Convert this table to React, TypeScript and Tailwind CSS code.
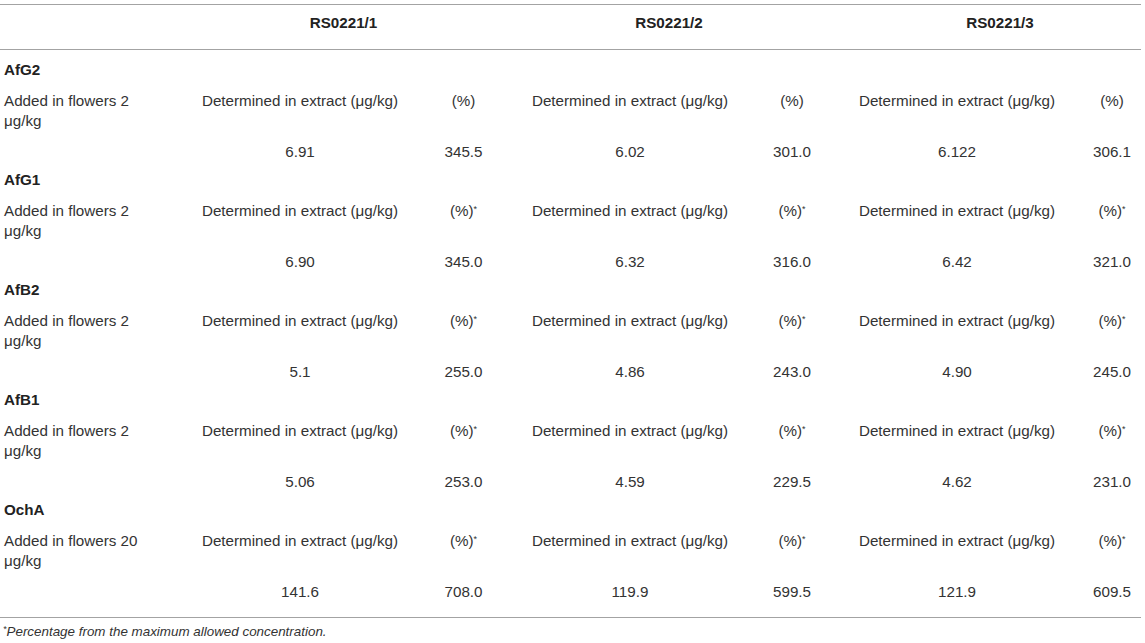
import React from 'react';

/**
 * RecoveryTable
 * Spiked flower samples: determined amount in extract and % of the maximum allowed concentration.
 */

interface Group {
    name: string;
    amount: string;
    starred: boolean;
    values: [string, string][];
}

const groups: Group[] = [
    { name: 'AfG2', amount: '2', starred: false, values: [['6.91', '345.5'], ['6.02', '301.0'], ['6.122', '306.1']] },
    { name: 'AfG1', amount: '2', starred: true, values: [['6.90', '345.0'], ['6.32', '316.0'], ['6.42', '321.0']] },
    { name: 'AfB2', amount: '2', starred: true, values: [['5.1', '255.0'], ['4.86', '243.0'], ['4.90', '245.0']] },
    { name: 'AfB1', amount: '2', starred: true, values: [['5.06', '253.0'], ['4.59', '229.5'], ['4.62', '231.0']] },
    { name: 'OchA', amount: '20', starred: true, values: [['141.6', '708.0'], ['119.9', '599.5'], ['121.9', '609.5']] },
];

const samples = ['RS0221/1', 'RS0221/2', 'RS0221/3'];

export default function App() {
    return (
        <div className="bg-white w-[1145px] h-[643px] pt-1 text-[15.2px] leading-5 text-[#333]" style={{ fontFamily: '"Liberation Sans", Arial, sans-serif' }}>
            <table className="w-[1141px] table-fixed border-collapse">
                <colgroup>
                    <col className="w-[180px]" />
                    <col className="w-[240px]" />
                    <col className="w-[87px]" />
                    <col className="w-[246px]" />
                    <col className="w-[78px]" />
                    <col className="w-[252px]" />
                    <col className="w-[58px]" />
                </colgroup>
                <thead>
                    <tr className="border-t border-b border-[#a3a3a3]">
                        <th className="pt-2 pb-4"></th>
                        <th colSpan={2} className="pt-2 pb-4 text-center font-bold text-[#222]">{samples[0]}</th>
                        <th colSpan={2} className="pt-2 pb-4 text-center font-bold text-[#222]">{samples[1]}</th>
                        <th colSpan={2} className="pt-2 pb-4 pl-[28px] text-center font-bold text-[#222]">{samples[2]}</th>
                    </tr>
                </thead>
                <tbody className="border-b border-[#a3a3a3]">
                    {groups.map((g, gi) => {
                        const last = gi === groups.length - 1;
                        return (
                            <React.Fragment key={g.name}>
                                <tr>
                                    <td colSpan={7} className={`${gi === 0 ? 'pt-[10px]' : 'pt-1'} pb-1 pl-1 font-bold text-[#222]`}>{g.name}</td>
                                </tr>
                                <tr>
                                    <td className="py-[7px] pl-1 align-top">
                                        <div className="max-w-[150px]">Added in flowers {g.amount} μg/kg</div>
                                    </td>
                                    {g.values.map((_, i) => (
                                        <React.Fragment key={i}>
                                            <td className="py-[7px] text-center align-top whitespace-nowrap">Determined in extract (μg/kg)</td>
                                            <td className="py-[7px] text-center align-top whitespace-nowrap">(%){g.starred && <sup className="text-[9px]">*</sup>}</td>
                                        </React.Fragment>
                                    ))}
                                </tr>
                                <tr>
                                    <td className={`pt-1 ${last ? 'pb-[15px]' : 'pb-1'}`}></td>
                                    {g.values.map(([det, pct], i) => (
                                        <React.Fragment key={i}>
                                            <td className={`pt-1 ${last ? 'pb-[15px]' : 'pb-1'} text-center`}>{det}</td>
                                            <td className={`pt-1 ${last ? 'pb-[15px]' : 'pb-1'} text-center`}>{pct}</td>
                                        </React.Fragment>
                                    ))}
                                </tr>
                            </React.Fragment>
                        );
                    })}
                </tbody>
            </table>
            <p className="pt-[6px] pl-[3px] text-[13.4px] leading-4 italic text-[#333]">
                <sup className="text-[9px]">*</sup>Percentage from the maximum allowed concentration.
            </p>
        </div>
    );
}
